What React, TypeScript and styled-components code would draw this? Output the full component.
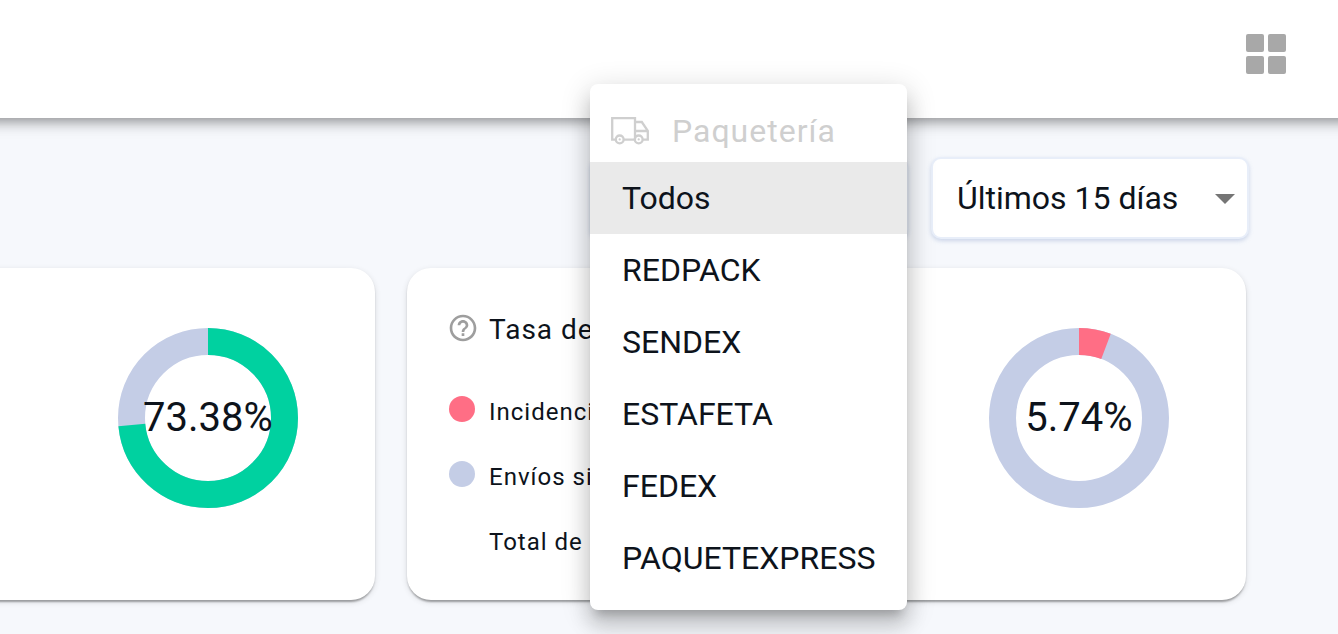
import React from "react";
import styled, { createGlobalStyle } from "styled-components";

const colors = {
  text: "#0d131b",
  page: "#f6f8fc",
  muted: "#c4cde6",
  green: "#00d1a0",
  red: "#ff6e85",
};

const GlobalStyle = createGlobalStyle`
  * { box-sizing: border-box; }
  body {
    margin: 0;
    background: ${colors.page};
    color: ${colors.text};
    font-family: Roboto, "Liberation Sans", sans-serif;
  }
  button, select { font: inherit; color: inherit; }
`;

const Page = styled.div`
  min-height: 100vh;
  overflow-x: clip;
  padding-bottom: 32px;
`;

const TopBar = styled.header`
  display: flex;
  align-items: center;
  justify-content: flex-end;
  height: 118px;
  margin: 0 -24px;
  padding: 0 76px 10px 0;
  background: #fff;
  box-shadow: 0 4px 8px -2px rgba(0, 0, 0, 0.2), 0 8px 10px rgba(0, 0, 0, 0.14),
    0 2px 20px rgba(0, 0, 0, 0.12);
`;

const IconButton = styled.button`
  display: flex;
  padding: 0;
  border: 0;
  background: none;
  cursor: pointer;
`;

const Filters = styled.div`
  display: flex;
  justify-content: flex-end;
  gap: 23px;
  padding: 39px 89px 0 0;
`;

const Field = styled.div`
  position: relative;
  width: 318px;
`;

const controlBox = `
  display: block;
  width: 100%;
  height: 82px;
  padding: 0 64px 0 24px;
  border: 2px solid #e8eef9;
  border-radius: 10px;
  background: #fff;
  box-shadow: 0 2px 4px rgba(140, 160, 205, 0.4);
`;

const Trigger = styled.button`
  ${controlBox}
`;

const Select = styled.select`
  ${controlBox}
  appearance: none;
  font-size: 32px;
`;

const Arrow = styled.svg`
  position: absolute;
  right: 0;
  top: 17px;
  pointer-events: none;
`;

const Menu = styled.ul`
  position: absolute;
  z-index: 2;
  top: -73px;
  left: 0;
  width: 317px;
  margin: 0;
  padding: 16px 0;
  list-style: none;
  background: #fff;
  border-radius: 8px;
  box-shadow: 0 10px 10px -6px rgba(0, 0, 0, 0.2),
    0 16px 20px 2px rgba(0, 0, 0, 0.14), 0 6px 28px 4px rgba(0, 0, 0, 0.12);
`;

const MenuTitle = styled.li`
  display: flex;
  align-items: center;
  gap: 22px;
  height: 62px;
  padding-left: 20px;
  font-size: 32px;
  letter-spacing: 1px;
  color: #cfcfcf;
`;

const MenuItem = styled.li`
  height: 72px;
  padding-left: 32px;
  font-size: 32px;
  line-height: 72px;
  cursor: pointer;
  background: ${(p) => (p["aria-selected"] ? "#eaeaea" : "transparent")};
`;

const Cards = styled.main`
  display: grid;
  grid-template-columns: 1fr 1fr;
  gap: 32px;
  margin: 29px 92px 0 -464px;
`;

const Card = styled.section`
  display: flex;
  justify-content: space-between;
  min-height: 332px;
  padding: 44px 77px 40px 42px;
  background: #fff;
  border-radius: 24px;
  box-shadow: 0 4px 2px -2px rgba(0, 0, 0, 0.2), 0 2px 2px rgba(0, 0, 0, 0.14),
    0 2px 6px rgba(0, 0, 0, 0.12);
`;

const Heading = styled.h2`
  display: flex;
  align-items: flex-start;
  gap: 10px;
  margin: 0 0 48px -2px;
  font-size: 28px;
  font-weight: 400;
  line-height: 36px;
  letter-spacing: 1px;
`;

const Legend = styled.ul`
  display: grid;
  gap: 32px;
  margin: 0;
  padding: 0;
  list-style: none;
`;

const LegendRow = styled.li`
  display: grid;
  grid-template-columns: 26px auto;
  column-gap: 14px;
  align-items: start;
  font-size: 24px;
  line-height: 33px;
  letter-spacing: 1px;
`;

const Dot = styled.span<{ $color: string }>`
  width: 26px;
  height: 26px;
  border-radius: 50%;
  background: ${(p) => p.$color};
`;

const DonutBox = styled.div`
  margin-left: auto;
  padding-top: 16px;
`;

const Ring = styled.div`
  display: grid;
  place-items: center;
  font-size: 40px;
  line-height: 48px;

  > * { grid-area: 1 / 1; }
`;

function Donut({ value, color }: { value: number; color: string }) {
  const r = 76.5;
  const length = 2 * Math.PI * r;
  return (
    <DonutBox>
      <Ring>
        <svg width="180" height="180" viewBox="0 0 180 180" fill="none" strokeWidth="27" aria-hidden="true">
          <circle cx="90" cy="90" r={r} stroke={colors.muted} />
          <circle
            cx="90"
            cy="90"
            r={r}
            stroke={color}
            strokeDasharray={`${(length * value) / 100} ${length}`}
            transform="rotate(-90 90 90)"
          />
        </svg>
        <span>{value}%</span>
      </Ring>
    </DonutBox>
  );
}

const GridIcon = () => (
  <svg width="40" height="40" viewBox="0 0 40 40" fill="#a8a8a8" aria-hidden="true">
    <rect width="18" height="18" rx="2" />
    <rect x="22" width="18" height="18" rx="2" />
    <rect y="22" width="18" height="18" rx="2" />
    <rect x="22" y="22" width="18" height="18" rx="2" />
  </svg>
);

const TruckIcon = () => (
  <svg width="40" height="30" viewBox="0 0 40 30" fill="none" stroke="#cfcfcf" strokeWidth="2.3" aria-hidden="true">
    <path d="M5.6 23.6H2.2V2.2h22.8v21.4M13.8 23.6h10.8M25 6h6.8l6 8.800v8.800h-5M25 15h12.600" />
    <circle cx="9.7" cy="23.4" r="3.9" />
    <circle cx="28.7" cy="23.4" r="3.9" />
    <circle cx="9.7" cy="23.4" r="1.1" fill="#cfcfcf" stroke="none" />
    <circle cx="28.7" cy="23.4" r="1.1" fill="#cfcfcf" stroke="none" />
  </svg>
);

const HelpIcon = () => (
  <svg width="32" height="32" viewBox="0 0 24 24" fill="#9e9e9e" aria-hidden="true">
    <path d="M11 18h2v-2h-2v2zm1-16C6.48 2 2 6.48 2 12s4.48 10 10 10 10-4.480 10-10S17.520 2 12 2zm0 18c-4.410 0-8-3.590-8-8s3.590-8 8-8 8 3.590 8 8-3.590 8-8 8zm0-14c-2.210 0-4 1.790-4 4h2c0-1.100.9-2 2-2s2 .9 2 2c0 2-3 1.750-3 5h2c0-2.250 3-2.500 3-5 0-2.210-1.790-4-4-4z" />
  </svg>
);

const carriers = ["Todos", "REDPACK", "SENDEX", "ESTAFETA", "FEDEX", "PAQUETEXPRESS"];

export default function App() {
  const [carrier, setCarrier] = React.useState("Todos");
  return (
    <Page>
      <GlobalStyle />
      <TopBar>
        <IconButton type="button" aria-label="Aplicaciones">
          <GridIcon />
        </IconButton>
      </TopBar>
      <Filters>
        <Field>
          <Trigger type="button" aria-label="Paquetería" aria-haspopup="listbox" aria-expanded="true" />
          <Menu role="listbox" aria-label="Paquetería">
            <MenuTitle role="presentation">
              <TruckIcon />
              Paquetería
            </MenuTitle>
            {carriers.map((name) => (
              <MenuItem
                key={name}
                role="option"
                tabIndex={0}
                aria-selected={name === carrier}
                onClick={() => setCarrier(name)}
              >
                {name}
              </MenuItem>
            ))}
          </Menu>
        </Field>
        <Field>
          <Select aria-label="Periodo" defaultValue="15">
            <option value="15">Últimos 15 días</option>
          </Select>
          <Arrow width="48" height="48" viewBox="0 0 24 24" fill="#757575" aria-hidden="true">
            <path d="M7 10l5 5 5-5z" />
          </Arrow>
        </Field>
      </Filters>
      <Cards>
        <Card>
          <Donut value={73.38} color={colors.green} />
        </Card>
        <Card>
          <div>
            <Heading>
              <HelpIcon />
              Tasa de incidencias
            </Heading>
            <Legend>
              <LegendRow>
                <Dot $color={colors.red} />
                Incidencias
              </LegendRow>
              <LegendRow>
                <Dot $color={colors.muted} />
                Envíos sin incidencias
              </LegendRow>
              <LegendRow>
                <Dot $color="transparent" />
                Total de envíos
              </LegendRow>
            </Legend>
          </div>
          <Donut value={5.74} color={colors.red} />
        </Card>
      </Cards>
    </Page>
  );
}
